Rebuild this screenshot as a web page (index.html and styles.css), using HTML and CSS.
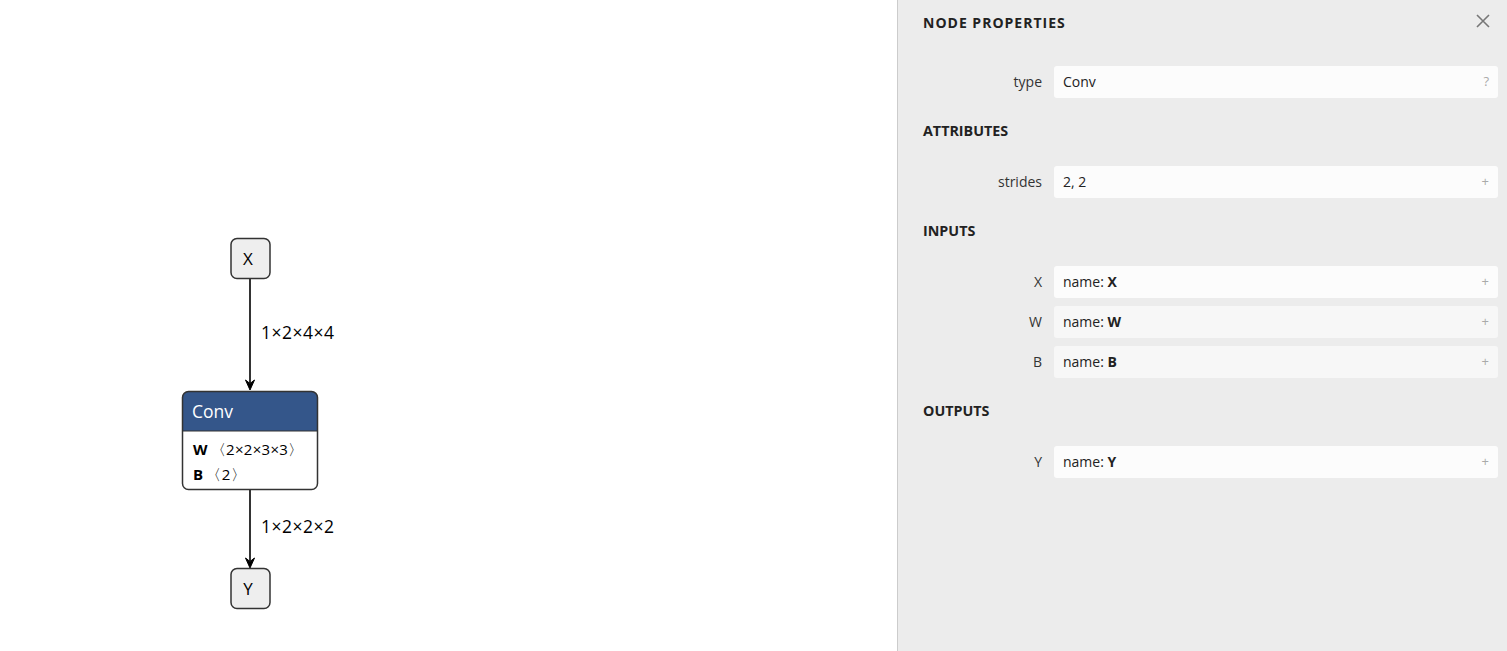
FILE: index.html
```html
<!DOCTYPE html>
<html lang="en">
<head>
<meta charset="utf-8">
<title>Node Properties</title>
<link rel="stylesheet" href="styles.css">
</head>
<body>
<div class="app">
  <div class="canvas">
    <svg class="graph" width="897" height="651" viewBox="0 0 897 651" xmlns="http://www.w3.org/2000/svg">
      <g class="edge">
        <line x1="250" y1="278" x2="250" y2="383" />
        <path d="M245.5 380 L250 390 L254.5 380 L250 383.5 Z" />
        <text x="261" y="339" class="edge-label">1×2×4×4</text>
      </g>
      <g class="edge">
        <line x1="250" y1="490" x2="250" y2="561" />
        <path d="M245.5 558 L250 568 L254.5 558 L250 561.5 Z" />
        <text x="261" y="533" class="edge-label">1×2×2×2</text>
      </g>
      <g class="io">
        <rect x="231" y="238.5" width="39" height="40" rx="6" />
        <text x="248" y="265" text-anchor="middle">X</text>
      </g>
      <g class="io">
        <rect x="231" y="568.5" width="39" height="40" rx="6" />
        <text x="248" y="595" text-anchor="middle">Y</text>
      </g>
      <g class="op">
        <path class="op-head" d="M182.5 431 V397.5 a6 6 0 0 1 6 -6 H311.5 a6 6 0 0 1 6 6 V431 Z" />
        <rect class="op-border" x="182.5" y="391.5" width="135" height="98" rx="6" />
        <line class="op-sep" x1="182.5" y1="431" x2="317.5" y2="431" />
        <text x="192" y="418" class="op-title">Conv</text>
        <text x="193" y="455" class="op-attr"><tspan class="b">W</tspan><tspan dx="3">〈2×2×3×3〉</tspan></text>
        <text x="193" y="480" class="op-attr"><tspan class="b">B</tspan><tspan dx="3">〈2〉</tspan></text>
      </g>
    </svg>
  </div>
  <aside class="sidebar">
    <div class="title-bar">
      <span class="title">NODE PROPERTIES</span>
      <svg class="close" width="14" height="14" viewBox="0 0 14 14" xmlns="http://www.w3.org/2000/svg">
        <path d="M1 1 L13 13 M13 1 L1 13" />
      </svg>
    </div>
    <div class="content">
      <div class="row">
        <div class="label">type</div>
        <div class="value">Conv<span class="btn">?</span></div>
      </div>
      <div class="section">ATTRIBUTES</div>
      <div class="row">
        <div class="label">strides</div>
        <div class="value">2, 2<span class="btn">+</span></div>
      </div>
      <div class="section">INPUTS</div>
      <div class="rows">
        <div class="row">
          <div class="label">X</div>
          <div class="value">name: <b>X</b><span class="btn">+</span></div>
        </div>
        <div class="row">
          <div class="label">W</div>
          <div class="value init">name: <b>W</b><span class="btn">+</span></div>
        </div>
        <div class="row">
          <div class="label">B</div>
          <div class="value init">name: <b>B</b><span class="btn">+</span></div>
        </div>
      </div>
      <div class="section">OUTPUTS</div>
      <div class="row">
        <div class="label">Y</div>
        <div class="value">name: <b>Y</b><span class="btn">+</span></div>
      </div>
    </div>
  </aside>
</div>
</body>
</html>
```
FILE: styles.css
```css
html, body {
  margin: 0;
  padding: 0;
  height: 100%;
  overflow: hidden;
  background: #ffffff;
  font-family: "Open Sans", "Noto Sans", "Liberation Sans", sans-serif;
}

.app {
  display: flex;
  width: 1507px;
  height: 651px;
}

.canvas {
  flex: 0 0 897px;
  height: 651px;
  background: #ffffff;
}

.graph {
  display: block;
  font-family: "Open Sans", "Noto Sans", "Liberation Sans", sans-serif;
}

.edge line {
  stroke: #000000;
  stroke-width: 1.6;
}

.edge path {
  fill: #000000;
  stroke: #000000;
  stroke-width: 1;
  stroke-linejoin: miter;
}

.edge-label {
  font-size: 17.5px;
  letter-spacing: 0.5px;
  fill: #000000;
}

.io rect {
  fill: #eeeeee;
  stroke: #333333;
  stroke-width: 1.5;
}

.io text {
  font-size: 17px;
  fill: #000000;
}

.op-head {
  fill: #34568a;
}

.op-border {
  fill: none;
  stroke: #333333;
  stroke-width: 1.5;
}

.op-sep {
  stroke: #333333;
  stroke-width: 1;
}

.op-title {
  font-size: 17.5px;
  fill: #ffffff;
}

.op-attr {
  font-size: 15px;
  letter-spacing: 0.3px;
  fill: #000000;
}

.op-attr .b {
  font-weight: 700;
}

.sidebar {
  flex: 1 1 auto;
  box-sizing: border-box;
  height: 651px;
  background: #ececec;
  border-left: 1px solid #cccccc;
  padding: 12px 9px 0 25px;
  color: #222222;
  font-size: 14px;
}

.title-bar {
  display: flex;
  justify-content: space-between;
  align-items: center;
  height: 20px;
}

.title {
  font-weight: 700;
  font-size: 14px;
  letter-spacing: 1px;
  color: #222222;
}

.close {
  margin-right: 8px;
  margin-top: -2px;
}

.close path {
  stroke: #777777;
  stroke-width: 1.6;
  fill: none;
}

.content {
  margin-top: 34px;
}

.section {
  height: 20px;
  line-height: 20px;
  margin: 23px 0 25px;
  font-weight: 700;
  font-size: 14.3px;
  color: #222222;
}

.rows {
  display: flex;
  flex-direction: column;
  gap: 8px;
}

.row {
  display: grid;
  grid-template-columns: 119px 1fr;
  column-gap: 12px;
  align-items: center;
  height: 32px;
}

.label {
  text-align: right;
  color: #333333;
  line-height: 32px;
}

.value {
  position: relative;
  height: 32px;
  line-height: 31px;
  padding: 0 30px 0 9px;
  background: #fcfcfc;
  border-radius: 3px;
  color: #222222;
  white-space: nowrap;
}

.value.init {
  background: #f7f7f7;
}

.value b {
  font-weight: 700;
}

.btn {
  position: absolute;
  right: 9px;
  top: 0;
  color: #aaaaaa;
  font-size: 13px;
}
```
